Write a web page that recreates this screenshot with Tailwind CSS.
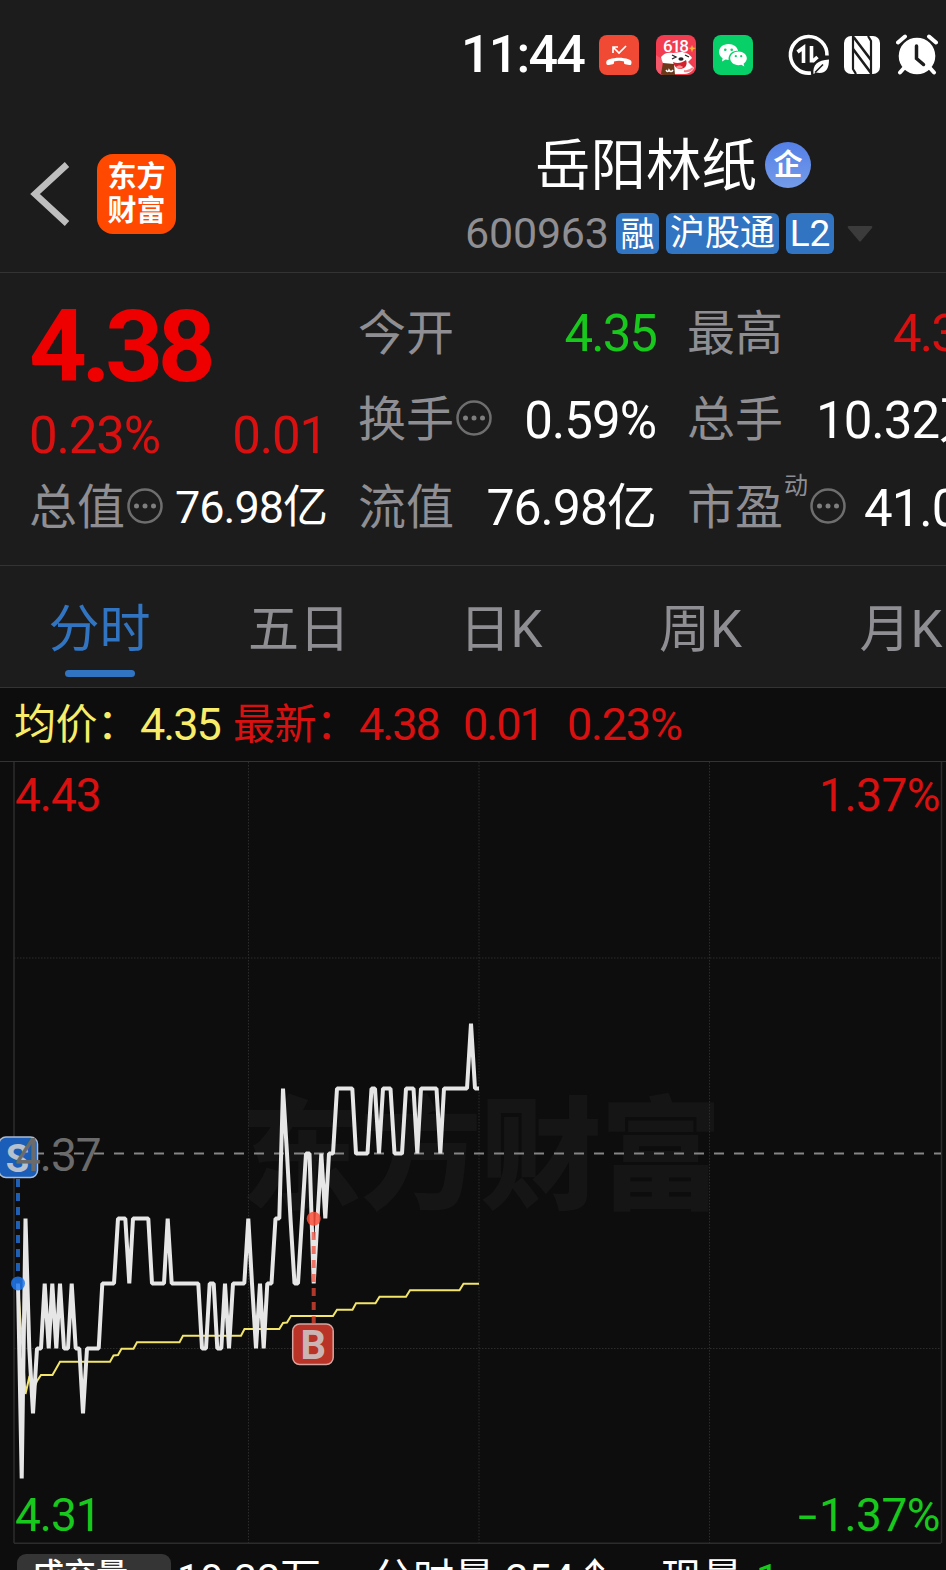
<!DOCTYPE html>
<html lang="zh-CN">
<head>
    <meta charset="UTF-8">
    <meta name="viewport" content="width=device-width, initial-scale=1.0">
    <title>岳阳林纸 600963</title>
    <script src="https://cdn.jsdelivr.net/npm/@tailwindcss/browser@4"></script>
</head>
<body class="bg-[#1c1c1c] font-['Roboto','Noto_Sans_CJK_SC',sans-serif] text-white">
    <div class="w-[946px] h-[1570px] overflow-hidden flex flex-col whitespace-nowrap leading-none">

        <!-- Status bar -->
        <div class="h-[110px] shrink-0 flex items-center pl-[461px]">
            <span class="w-[138px] text-[52px] font-medium tracking-[-1.800px]">11:44</span>
            <svg class="w-10 h-10 shrink-0" viewBox="0 0 40 40">
                <rect width="40" height="40" rx="8" fill="#f04a34"/>
                <path d="M14 18v-6h5M14 12l6 6 7-7" fill="none" stroke="#fff" stroke-width="1.7"/>
                <path d="M7.500 29c-.8-3 .5-4 3-4.800 6-2 13-2 19 0 2.500.8 3.600 1.800 2.800 4.800-.3 1-1 1.200-2 1l-4-.8c-1-.2-1.300-.8-1.300-1.800v-1c-3-.8-7-.8-10 0v1c0 1-.3 1.600-1.300 1.800l-4 .8c-1.200.2-1.900 0-2.200-1z" fill="#fff"/>
            </svg>
            <svg class="ml-[17px] w-10 h-10 shrink-0" viewBox="0 0 40 40">
                <rect width="40" height="40" rx="8" fill="#f23c50"/>
                <path d="M0 20l7 5-2 15H8a8 8 0 0 1-8-8z" fill="#f5586a"/>
                <path d="M36 10l1 2.500 3 .5-3 1.500-1 3-1-3-2-1.500 2-.5z" fill="#ffb13b"/>
                <text x="20" y="17" text-anchor="middle" font-size="17" font-weight="500" fill="#fff" textLength="26">618</text>
                <path d="M5 22c3-4 7-5 12-4l8-1c4 0 9 2 11 6l-4 4 6 6c-2 4-6 6-11 6H16c-6-3-9-9-11-17z" fill="#fff"/>
                <path d="M17 27c4 2 9 1 13-2 2 5-1 9-6 9-3 0-6-3-7-7z" fill="#d3222d"/>
                <path d="M20 32c2-2 5-2 7 0-2 2-5 2-7 0z" fill="#ff8f93"/>
                <path d="M16 20l4 2-4 2M29 20l4 2" fill="none" stroke="#222" stroke-width="1.300"/>
                <ellipse cx="25" cy="24" rx="2.600" ry="1.700" fill="#222"/>
                <path d="M28 36c4 1 6 0 9-3" stroke="#f58490" stroke-width="2" fill="none"/>
                <path d="M7 28l11 1 1 11H8a8 8 0 0 1-3-1z" fill="#6b3a1c"/>
                <path d="M10 35q2 3 3 0 2 3 4 0" fill="none" stroke="#fff" stroke-width="1.500"/>
            </svg>
            <svg class="ml-[17px] w-10 h-10 shrink-0" viewBox="0 0 40 40">
                <rect width="40" height="40" rx="8" fill="#08d068"/>
                <path d="M15.500 9C10 9 6 12.600 6 17c0 2.600 1.400 4.800 3.600 6.200L9 26.500l3.600-1.900c1 .2 2 .4 3 .4A8 8 0 0 1 25 16c-.4-4-4.500-7-9.500-7z" fill="#fff"/>
                <path d="M25.500 16.500c-4.700 0-8.300 3-8.300 6.800s3.600 6.900 8.300 6.900c1 0 2-.2 2.800-.4l3 1.600-.7-2.700c2-1.300 3.200-3.200 3.200-5.400 0-3.800-3.600-6.800-8.300-6.800z" fill="#fff"/>
                <g fill="#08d068"><circle cx="12.300" cy="14.700" r="1.300"/><circle cx="18.700" cy="14.700" r="1.300"/><circle cx="22.800" cy="21.200" r="1.100"/><circle cx="28.200" cy="21.200" r="1.100"/></g>
            </svg>
            <svg class="ml-[35px] w-[42px] h-[42px] shrink-0" viewBox="0 0 42 42" fill="none" stroke="#fff">
                <path d="M39 21.500A18.300 18.300 0 1 0 23 39" stroke-width="3.600"/>
                <path d="M9.500 18l6-4.500V29M23.500 12v16.500M24.500 27.500l5-4.500" stroke-width="3.600"/>
                <path d="M25.500 40c-1-9 4-14 15.500-14.500 0 9-3 15-13 13z" fill="#fff" stroke="none"/>
                <path d="M27 38.500l8-8" stroke="#1c1c1c" stroke-width="1.600"/>
            </svg>
            <svg class="ml-[14px] w-9 h-[38px] shrink-0" viewBox="0 0 36 38">
                <rect width="36" height="38" rx="7" fill="#fff"/>
                <path d="M9 0v33l3 5M27 38V5l-3-5" fill="none" stroke="#1c1c1c" stroke-width="2.200"/>
                <path d="M9.500 1L27 24M9 13l18 24" stroke="#1c1c1c" stroke-width="2.600"/>
            </svg>
            <svg class="ml-4 w-[42px] h-[42px] shrink-0" viewBox="0 0 42 42">
                <path d="M8 34l-4 4.500M34 34l4 4.500M2 8.500L9 2.500M40 8.500L33 2.500" stroke="#fff" stroke-width="4" stroke-linecap="round"/>
                <circle cx="21" cy="22" r="18.300" fill="#fff"/>
                <path d="M20.500 12v12.500l7 6" fill="none" stroke="#1c1c1c" stroke-width="3.500" stroke-linecap="round"/>
            </svg>
        </div>

        <!-- Header -->
        <header class="h-[163px] shrink-0 flex border-b border-[#333333]">
            <svg class="mt-[50px] ml-[30px] w-10 h-[68px] shrink-0" viewBox="0 0 40 68">
                <path d="M37 4.500L5 34l32 29.500" fill="none" stroke="#bebebe" stroke-width="6.500"/>
            </svg>
            <div class="mt-11 ml-[27px] w-[79px] h-[80px] shrink-0 rounded-[16px] bg-[#ff4800] flex flex-col items-center justify-center gap-[5px] text-[29px] font-bold">
                <span>东方</span>
                <span>财富</span>
            </div>
            <div class="ml-[289px] flex flex-col">
                <div class="mt-[27px] ml-[70px] h-[56px] flex items-center">
                    <span class="pt-[3px] text-[55.500px]">岳阳林纸</span>
                    <span class="ml-[8px] w-[46px] h-[46px] rounded-full bg-linear-to-b from-[#547fe6] to-[#749ce9] flex items-center justify-center text-[29px] font-bold">企</span>
                </div>
                <div class="mt-[20px] h-[41px] flex items-center text-[35px]">
                    <span class="w-[151px] text-[43px] text-[#8e8e93] tracking-[-0.2px]">600963</span>
                    <span class="w-[43px] h-[41px] rounded-[6px] bg-[#3174c1] flex items-center justify-center text-[34px]">融</span>
                    <span class="ml-[7px] w-[113px] h-[41px] rounded-[6px] bg-[#3174c1] flex items-center justify-center">沪股通</span>
                    <span class="ml-[7px] w-[48px] h-[41px] rounded-[6px] bg-[#3174c1] flex items-center justify-center text-[37px]">L2</span>
                    <svg class="ml-[13px] w-[26px] h-[18px]" viewBox="0 0 26 18"><path d="M2 1h22q2 0 1 2L14 16q-1 1-2 0L1 3q-1-2 1-2z" fill="#3b3b3b"/></svg>
                </div>
            </div>
        </header>

        <!-- Quote -->
        <section class="h-[293px] shrink-0 flex gap-[31px] pl-[29px] border-b border-[#333333] text-[48px] text-[#8e8e93]">
            <div class="w-[298px] shrink-0 flex flex-col">
                <div class="mt-[20px] h-[106px] flex items-center text-[101px] font-bold text-[#ee0000] tracking-[-5.500px]">4.38</div>
                <div class="mt-[8px] h-[56px] flex items-center justify-between text-[51px] text-[#d81010] tracking-[-1.200px]">
                    <span>0.23%</span>
                    <span>0.01</span>
                </div>
                <div class="mt-[13px] h-[60px] flex items-center">
                    <span class="pt-[4px]">总值</span>
                    <svg class="ml-0.5 w-9 h-9" viewBox="0 0 36 36"><circle cx="18" cy="18" r="16.500" fill="none" stroke="#6e6e6e" stroke-width="2.500"/><g fill="#7e7e7e"><circle cx="9.500" cy="18" r="2.500"/><circle cx="18" cy="18" r="2.500"/><circle cx="26.500" cy="18" r="2.500"/></g></svg>
                    <span class="ml-auto pt-[3px] text-[45px] text-white tracking-[-1px]">76.98亿</span>
                </div>
            </div>
            <div class="w-[298px] shrink-0 flex flex-col">
                <div class="mt-[29px] h-[60px] flex items-center justify-between"><span class="pt-[4px]">今开</span><span class="pt-[2px] text-[51px] text-[#18c81c] tracking-[-2px]">4.35</span></div>
                <div class="mt-[26px] h-[60px] flex items-center">
                    <span class="pt-[4px]">换手</span>
                    <svg class="ml-0.5 w-9 h-9" viewBox="0 0 36 36"><circle cx="18" cy="18" r="16.500" fill="none" stroke="#6e6e6e" stroke-width="2.500"/><g fill="#7e7e7e"><circle cx="9.500" cy="18" r="2.500"/><circle cx="18" cy="18" r="2.500"/><circle cx="26.500" cy="18" r="2.500"/></g></svg>
                    <span class="ml-auto pt-[4px] text-[51px] text-white tracking-[-1px]">0.59%</span>
                </div>
                <div class="mt-[28px] h-[60px] flex items-center justify-between"><span class="pt-[4px]">流值</span><span class="pt-[4px] text-[50px] text-white tracking-[-1px]">76.98亿</span></div>
            </div>
            <div class="w-[310px] shrink-0 flex flex-col">
                <div class="mt-[29px] h-[60px] flex items-center"><span class="pt-[4px]">最高</span><span class="ml-[110px] pt-[2px] text-[51px] text-[#d81010] tracking-[-2px]">4.38</span></div>
                <div class="mt-[26px] h-[60px] flex items-center"><span class="pt-[4px]">总手</span><span class="ml-[33px] pt-[4px] text-[51px] text-white tracking-[-1px]">10.32万</span></div>
                <div class="mt-[28px] h-[60px] flex items-center">
                    <span class="pt-[4px]">市盈</span>
                    <span class="mb-[40px] ml-px text-2xl">动</span>
                    <svg class="ml-0.5 w-9 h-9 shrink-0" viewBox="0 0 36 36"><circle cx="18" cy="18" r="16.500" fill="none" stroke="#6e6e6e" stroke-width="2.500"/><g fill="#7e7e7e"><circle cx="9.500" cy="18" r="2.500"/><circle cx="18" cy="18" r="2.500"/><circle cx="26.500" cy="18" r="2.500"/></g></svg>
                    <span class="ml-[18px] pt-[4px] text-[51px] text-white tracking-[-1px]">41.02</span>
                </div>
            </div>
        </section>

        <!-- Period tabs -->
        <nav class="h-[122px] shrink-0 flex border-b border-[#333333] text-[51px] text-[#8e8e93]">
            <div class="w-[199px] shrink-0 flex flex-col items-center text-[#3174c1]">
                <span class="mt-[38px] h-[50px]">分时</span>
                <span class="mt-[16px] w-[70px] h-[7px] rounded-full bg-[#3174c1]"></span>
            </div>
            <div class="w-[200px] shrink-0 flex justify-center pt-[38px]">五日</div>
            <div class="w-[204px] shrink-0 flex justify-center pt-[38px]">日K</div>
            <div class="w-[195px] shrink-0 flex justify-center pt-[38px]">周K</div>
            <div class="w-[206px] shrink-0 flex justify-center pt-[38px]">月K</div>
        </nav>

        <!-- Average / latest price -->
        <div class="h-[74px] shrink-0 flex items-center pl-[14px] bg-[#0d0d0d] border-b border-[#333333] text-[45px] text-[#d81010] tracking-[-2px]">
            <span class="w-[126px] text-[42px] text-[#f8ec68] tracking-[-0.5px]">均价：</span>
            <span class="w-[93px] text-[#f8ec68]">4.35</span>
            <span class="w-[126px] text-[42px] tracking-[-0.5px]">最新：</span>
            <span class="w-[104px]">4.38</span>
            <span class="w-[104px]">0.01</span>
            <span class="tracking-[-1.200px]">0.23%</span>
        </div>

        <!-- Intraday chart -->
        <div class="relative h-[782px] shrink-0 bg-[#0d0d0d] text-[46px]">
            <svg class="w-[946px] h-[782px]" viewBox="0 762 946 782" fill="none">
                <text x="240" y="1199" font-size="122" font-weight="900" fill="#151515" textLength="482">东方财富</text>
                <g stroke="#2c2c2c">
                    <path d="M14 762V1543M941.500 762V1543" stroke-width="1.500"/>
                    <path d="M14 1543.500H941" stroke-width="2"/>
                    <path d="M248.500 762V1543M479 762V1543M709.500 762V1543M14 958H941M14 1348.500H941" stroke-dasharray="1.500 1.500"/>
                </g>
                <path d="M34 1153.500H941" stroke="#858585" stroke-width="2" stroke-dasharray="10 10"/>
                <polyline stroke="#f3e569" stroke-width="2" points="18,1284 25.500,1394 29.500,1376 33,1390 37,1381 41,1375 52.500,1375 60,1361.700 110,1361.700 113.500,1355.500 118,1355 121.500,1348.700 133.500,1348.700 137,1342.300 179.500,1342.300 183,1335.700 241,1335.700 244.500,1329 279.300,1329 283,1323 287,1322.500 291,1316 333,1316 337,1309.700 352.500,1309.700 356,1303.300 375.500,1303.300 379.500,1296.700 406,1296.700 410,1290.300 459.500,1290.300 463.500,1283.700 479,1283.700"/>
                <polyline stroke="#e6e6e6" stroke-width="4" stroke-linejoin="bevel" points="18,1283.500 21.700,1478.500 25.500,1218.500 29.300,1348.500 33,1413.500 37,1348.500 41,1348.500 44.700,1283.500 48.700,1348.500 52.300,1283.500 56.300,1348.500 60,1283.500 64,1348.500 68,1348.500 71.700,1283.500 75.700,1348.500 79.300,1348.500 83,1413.500 87,1348.500 98.700,1348.500 102.300,1283.500 114,1283.500 118,1218.500 125.300,1218.500 129.300,1283.500 133,1218.500 148.300,1218.500 152,1283.500 164,1283.500 167.700,1218.500 171.700,1283.500 198.300,1283.500 202,1348.500 206,1348.500 209.700,1283.500 213.700,1283.500 217.300,1348.500 221.300,1348.500 225,1283.500 229,1348.500 233,1283.500 244.300,1283.500 248.300,1218.500 252,1283.500 256,1348.500 260,1283.500 263.700,1348.500 267.300,1283.500 271.500,1283.500 275.500,1218.500 279.300,1218.500 283,1088.500 287,1153.500 290.500,1218.500 294.500,1283.500 298,1283.500 302,1218.500 306,1153.500 309.500,1153.500 313.700,1283.500 317.500,1218.500 321.300,1153.500 325.300,1218.500 329,1153.500 333,1153.500 337,1088.500 352.300,1088.500 356,1153.500 367.500,1153.500 371.500,1088.500 375,1088.500 379,1153.500 383,1088.500 390.500,1088.500 394.500,1153.500 402,1153.500 406,1088.500 413.500,1088.500 417.300,1153.500 421,1088.500 436.500,1088.500 440.300,1153.500 444,1088.500 467,1088.500 471,1023.500 475,1088.500 479,1088.500"/>

                <!-- Sell marker -->
                <path d="M18 1179V1276" stroke="#2060b4" stroke-width="4" stroke-dasharray="8 6"/>
                <circle cx="18" cy="1283.500" r="7" fill="#1f78ee" fill-opacity=".85"/>
                <rect x="-1" y="1137" width="38.500" height="40.500" rx="7" fill="#1a5eb9" stroke="#aabbd2" stroke-width="1.500"/>
                <text x="17.500" y="1171.500" text-anchor="middle" font-size="38" font-weight="700" fill="#b7c0cd">S</text>

                <!-- Buy marker -->
                <path d="M313.700 1232V1323" stroke="#f04a38" stroke-opacity=".72" stroke-width="4" stroke-dasharray="8 6"/>
                <circle cx="313.700" cy="1218.700" r="7" fill="#f9503a" fill-opacity=".85"/>
                <rect x="292.700" y="1324" width="40.500" height="40.500" rx="7" fill="#b93426" stroke="#d6a5a1" stroke-width="1.500"/>
                <text x="313.300" y="1358.500" text-anchor="middle" font-size="40" font-weight="700" fill="#cbb5b4">B</text>
            </svg>
            <span class="absolute left-[15px] top-[10px] text-[#d81010] tracking-[-1px]">4.43</span>
            <span class="absolute right-[6px] top-[10px] text-[#d81010] tracking-[-0.5px]">1.37%</span>
            <span class="absolute left-[15px] top-[370px] text-[#6b6b6b] tracking-[-1px]">4.37</span>
            <span class="absolute left-[15px] top-[730px] text-[#18c81c] tracking-[-1px]">4.31</span>
            <span class="absolute right-[6px] top-[730px] text-[#18c81c] tracking-[-0.5px]"><span class="inline-block origin-right scale-x-150 mr-[3px]">-</span>1.37%</span>
        </div>

        <!-- Volume -->
        <div class="grow min-h-0 overflow-hidden bg-[#0d0d0d] flex items-start pl-[17px] pt-[10px] text-[41px]">
            <div class="w-[154px] h-[50px] shrink-0 rounded-[9px] bg-[#353535] pl-[15px] pt-[5px] text-[32px] font-medium">成交量</div>
            <span class="ml-[6px] pt-[5px] w-[195px] shrink-0">10.32万</span>
            <span class="pt-[5px] w-[289px] shrink-0">分时量 254↑</span>
            <span class="pt-[5px] w-[95px] shrink-0">现量</span>
            <span class="pt-[5px] text-[#18c81c]">1</span>
        </div>
    </div>
</body>
</html>
